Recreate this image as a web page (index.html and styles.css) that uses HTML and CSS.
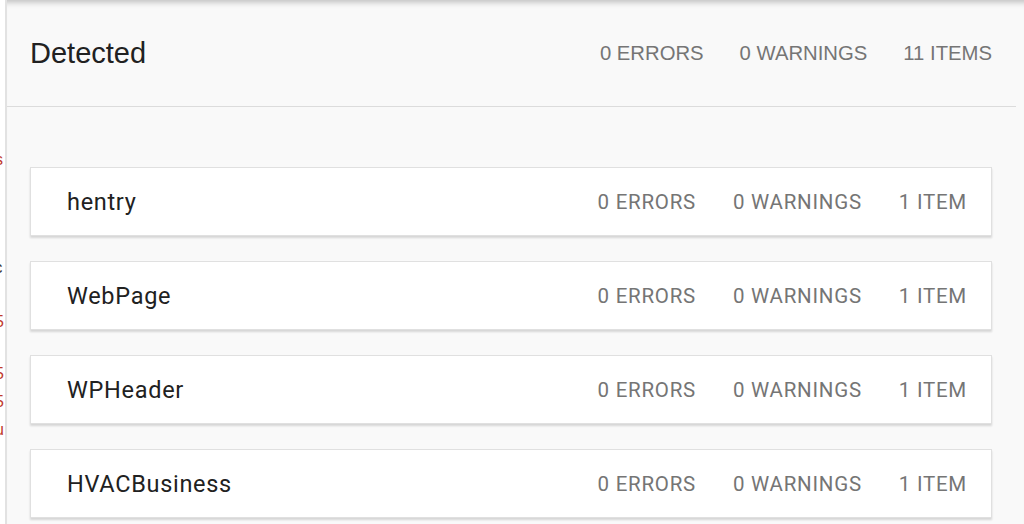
FILE: index.html
```html
<!DOCTYPE html>
<html>
<head>
<meta charset="utf-8">
<link rel="stylesheet" href="styles.css">
</head>
<body>
<div class="page">
  <div class="strip">
    <span class="frag red f1">s</span>
    <span class="frag dark f2">ɛ</span>
    <span class="frag red f3">5</span>
    <span class="frag red f4">5</span>
    <span class="frag red f5">5</span>
    <span class="frag red f6">u</span>
  </div>
  <div class="main">
    <div class="header">
      <h1 class="title">Detected</h1>
      <div class="stats head-stats">
        <span>0 ERRORS</span>
        <span>0 WARNINGS</span>
        <span>11 ITEMS</span>
      </div>
    </div>
    <div class="list">
      <div class="card">
        <span class="name">hentry</span>
        <div class="stats card-stats"><span>0 ERRORS</span><span>0 WARNINGS</span><span>1 ITEM</span></div>
      </div>
      <div class="card">
        <span class="name">WebPage</span>
        <div class="stats card-stats"><span>0 ERRORS</span><span>0 WARNINGS</span><span>1 ITEM</span></div>
      </div>
      <div class="card">
        <span class="name">WPHeader</span>
        <div class="stats card-stats"><span>0 ERRORS</span><span>0 WARNINGS</span><span>1 ITEM</span></div>
      </div>
      <div class="card">
        <span class="name">HVACBusiness</span>
        <div class="stats card-stats"><span>0 ERRORS</span><span>0 WARNINGS</span><span>1 ITEM</span></div>
      </div>
    </div>
  </div>
</div>
</body>
</html>
```
FILE: styles.css
```css
html, body {
  margin: 0;
  padding: 0;
  background: #ffffff;
}
.page {
  display: flex;
  height: 524px;
  overflow: hidden;
}
.strip {
  width: 5px;
  flex: none;
  background: #ffffff;
  border-right: 2px solid #e2e2e2;
  overflow: hidden;
  display: flex;
  flex-direction: column;
  align-items: flex-end;
  font-family: "Liberation Sans", Arial, sans-serif;
  font-size: 16px;
  line-height: 14px;
}
.frag {
  display: block;
  width: 5px;
  text-indent: -5px;
  white-space: nowrap;
}
.red { color: #c0392b; }
.dark { color: #333; }
.f1 { margin-top: 153px; }
.f2 { margin-top: 94px; }
.f3 { margin-top: 40px; }
.f4 { margin-top: 38px; }
.f5 { margin-top: 14px; }
.f6 { margin-top: 14px; }
.main {
  flex: 1;
  background: #f9f9f9;
  box-shadow: inset 0 8px 6px -6px rgba(0, 0, 0, 0.25);
  display: flex;
  flex-direction: column;
}
.header {
  height: 107px;
  margin-right: 8px;
  border-bottom: 1px solid #dcdcdc;
  display: flex;
  align-items: center;
  justify-content: space-between;
  padding: 0 24px 0 23px;
  box-sizing: border-box;
}
.title {
  margin: 0;
  font-family: "Liberation Sans", Arial, sans-serif;
  font-weight: normal;
  font-size: 29px;
  color: #212121;
}
.stats {
  display: flex;
  color: #757575;
}
.head-stats {
  font-family: "Liberation Sans", Arial, sans-serif;
  font-size: 20.3px;
  gap: 36px;
}
.list {
  display: flex;
  flex-direction: column;
  gap: 25px;
  padding: 60px 32px 0 23px;
}
.card {
  height: 69px;
  box-sizing: border-box;
  background: #ffffff;
  border: 1px solid #e0e0e0;
  box-shadow: 0 2px 2px rgba(0, 0, 0, 0.14);
  display: flex;
  align-items: center;
  justify-content: space-between;
  padding: 0 24px 0 36px;
}
.name {
  font-family: Roboto, sans-serif;
  font-size: 23.5px;
  letter-spacing: 0.7px;
  color: #212121;
}
.card-stats {
  font-family: Roboto, sans-serif;
  font-size: 20.5px;
  letter-spacing: 0.75px;
  gap: 37px;
}
```
